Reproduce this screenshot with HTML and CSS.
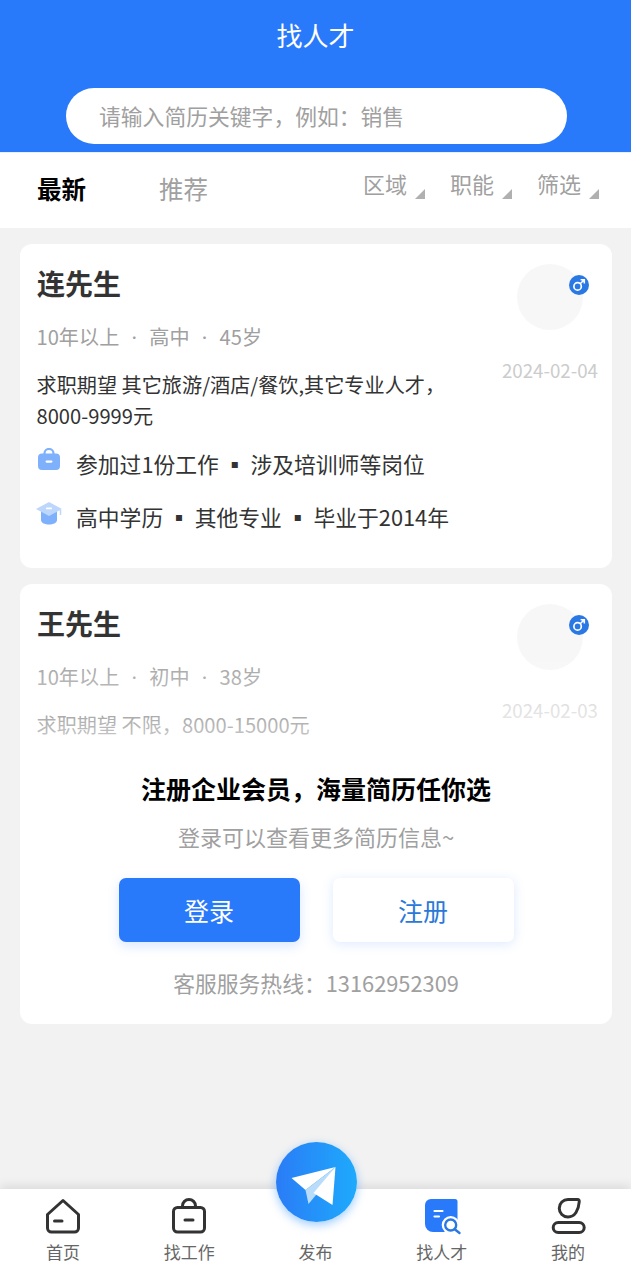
FILE: index.html
```html
<!DOCTYPE html>
<html lang="zh">
<head>
<meta charset="utf-8">
<title>找人才</title>
<link rel="stylesheet" href="styles.css">
</head>
<body>
<div class="app">
  <header class="top">
    <h1 class="top-title">找人才</h1>
    <div class="search">请输入简历关键字，例如：销售</div>
  </header>
  <nav class="filters">
    <span class="tab tab-on">最新</span>
    <span class="tab tab-off">推荐</span>
    <div class="drops">
      <span class="drop">区域</span>
      <span class="drop">职能</span>
      <span class="drop">筛选</span>
    </div>
  </nav>
  <main class="list">
    <article class="card">
      <div class="info">
        <div class="main">
          <h2 class="name">连先生</h2>
          <p class="meta">10年以上<i>•</i>高中<i>•</i>45岁</p>
          <p class="want">求职期望 其它旅游/酒店/餐饮,其它专业人才，<span class="nowrap">8000-9999元</span></p>
        </div>
        <div class="side">
          <div class="avatar">
            <svg class="sex" viewBox="0 0 20 20"><circle cx="10" cy="10" r="10" fill="#2a78e4"/><circle cx="8.6" cy="11.4" r="3.7" fill="none" stroke="#fff" stroke-width="1.7"/><path d="M11.2 8.8 15 5M11.6 4.7h3.7v3.7" fill="none" stroke="#fff" stroke-width="1.6"/></svg>
          </div>
          <div class="date">2024-02-04</div>
        </div>
      </div>
      <div class="fact">
        <svg class="fact-ico" viewBox="0 0 24 24"><path d="M7.500 7V5.500a4.500 4.500 0 0 1 9 0V7" fill="none" stroke="#7fb0fb" stroke-width="2.200"/><path d="M5 5.500h14a4 4 0 0 1 4 4V18a4 4 0 0 1-4 4H5a4 4 0 0 1-4-4V9.500a4 4 0 0 1 4-4z" fill="#7fb0fb"/><rect x="8.500" y="12.500" width="7" height="2.200" rx="1.100" fill="#fff"/></svg>
        <span>参加过1份工作<b>▪</b>涉及培训师等岗位</span>
      </div>
      <div class="fact fact-edu">
        <svg class="fact-ico fact-ico-cap" viewBox="0 0 26 24"><path d="M5 10h16v9c0 3-4 4.500-8 4.500S5 22 5 19z" fill="#7fb0fb"/><path d="M13 1 26 8l-13 7L0 8z" fill="#bcd6fc"/><rect x="10" y="6.500" width="6" height="1.800" rx=".9" fill="#fff"/><path d="M24.500 9v5" stroke="#bcd6fc" stroke-width="1.500"/></svg>
        <span>高中学历<b>▪</b>其他专业<b>▪</b>毕业于2014年</span>
      </div>
    </article>
    <article class="card card-locked">
      <div class="info">
        <div class="main">
          <h2 class="name">王先生</h2>
          <p class="meta">10年以上<i>•</i>初中<i>•</i>38岁</p>
          <p class="want">求职期望 不限，8000-15000元</p>
        </div>
        <div class="side">
          <div class="avatar">
            <svg class="sex" viewBox="0 0 20 20"><circle cx="10" cy="10" r="10" fill="#2a78e4"/><circle cx="8.6" cy="11.4" r="3.7" fill="none" stroke="#fff" stroke-width="1.7"/><path d="M11.2 8.8 15 5M11.6 4.7h3.7v3.7" fill="none" stroke="#fff" stroke-width="1.6"/></svg>
          </div>
          <div class="date">2024-02-03</div>
        </div>
      </div>
      <div class="veil"></div>
      <section class="gate">
        <h3 class="gate-title">注册企业会员，海量简历任你选</h3>
        <p class="gate-sub">登录可以查看更多简历信息~</p>
        <div class="gate-btns">
          <span class="btn btn-fill">登录</span>
          <span class="btn btn-line">注册</span>
        </div>
        <p class="gate-tel">客服服务热线：13162952309</p>
      </section>
    </article>
  </main>
  <footer class="bar">
    <div class="bar-item">
      <svg class="bar-ico" viewBox="0 0 36 36"><path d="M18 1.500 33.500 15.500V29a4 4 0 0 1-4 4H6.500a4 4 0 0 1-4-4V15.500z" fill="none" stroke="#333" stroke-width="3" stroke-linejoin="round"/><path d="M9.500 22h7.500" stroke="#333" stroke-width="3" stroke-linecap="round"/></svg>
      <span>首页</span>
    </div>
    <div class="bar-item">
      <svg class="bar-ico" viewBox="0 0 36 36"><path d="M11.500 8V7a6.500 6.500 0 0 1 13 0v1" fill="none" stroke="#333" stroke-width="3"/><rect x="2.500" y="8.500" width="31" height="24.500" rx="4" fill="none" stroke="#333" stroke-width="3"/><path d="M14 21h8" stroke="#333" stroke-width="3" stroke-linecap="round"/></svg>
      <span>找工作</span>
    </div>
    <div class="bar-item">
      <span class="bar-gap"></span>
      <span>发布</span>
    </div>
    <div class="bar-item">
      <svg class="bar-ico" viewBox="0 0 36 36"><path d="M7 0h24a2.500 2.500 0 0 1 2.500 2.500V29a4 4 0 0 1-4 4H9a8 8 0 0 1-8-8V6a6 6 0 0 1 6-6z" fill="#2979fb"/><path d="M10.500 12h8M10.500 17.500h4.500" stroke="#fff" stroke-width="2.200" stroke-linecap="round"/><circle cx="26.700" cy="26" r="9" fill="#fff"/><circle cx="26.700" cy="26" r="5.500" fill="#fff" stroke="#2a78e4" stroke-width="2.400"/><path d="M31 30.500l4.500 3.500" stroke="#2a78e4" stroke-width="2.400" stroke-linecap="round"/></svg>
      <span>找人才</span>
    </div>
    <div class="bar-item">
      <svg class="bar-ico bar-ico-me" viewBox="0 0 36 36"><path d="M18 .5H27.500Q29.500 .5 29.200 3C28.600 11 25 18 18 18A8.750 8.750 0 0 1 18 .5z" fill="none" stroke="#333" stroke-width="3"/><rect x="3.200" y="23.500" width="31" height="10" rx="5" fill="none" stroke="#333" stroke-width="3"/></svg>
      <span>我的</span>
    </div>
    <div class="fab">
      <svg viewBox="286.500 1152 60 60" class="fab-ico"><path d="M335 1167 291 1178 305 1190z" fill="#fff"/><path d="M335 1167 305 1190 308 1204 318 1192z" fill="#b9dcfa"/><path d="M335 1167 313 1193 332 1205z" fill="#fff"/></svg>
    </div>
  </footer>
</div>
</body>
</html>
```
FILE: styles.css
```css
* { box-sizing: border-box; margin: 0; padding: 0; }
html, body { height: 100%; }
body {
  font-family: "Noto Sans CJK SC", "Noto Sans", sans-serif;
  background: #f2f2f2;
  overflow: hidden;
}
.app { height: 1280px; display: flex; flex-direction: column; }

.top { height: 152px; background: #2979fb; padding-top: 17px; flex: none; }
.top-title { font-size: 26px; line-height: 36px; font-weight: 400; color: #fff; text-align: center; }
.search {
  width: 501px; height: 56px; margin: 35px 0 0 66px; padding-left: 33px;
  background: #fff; border-radius: 28px;
  font-size: 21.800px; line-height: 55px; color: #a0a0a0;
}

.filters { height: 76px; background: #fff; flex: none; display: flex; align-items: flex-start; border-top: 1px solid #e8f0fe; }
.tab { font-size: 24.500px; line-height: 36px; margin-top: 18px; }
.tab-on { margin-left: 37px; width: 122px; font-weight: 700; color: #000; }
.tab-off { color: #a0a0a0; }
.drops { margin-left: auto; margin-right: 7px; display: flex; margin-top: 14px; }
.drop { position: relative; width: 87px; padding-right: 20px; font-size: 22px; line-height: 33px; color: #a0a0a0; }
.drop::after {
  content: ""; position: absolute; left: 52px; top: 22px; width: 0; height: 0;
  border-style: solid; border-width: 0 0 10px 10px;
  border-color: transparent transparent #b0b0b0 transparent;
}

.list { flex: 1; padding: 16px 19px 0 20px; display: flex; flex-direction: column; gap: 16px; min-height: 0; }
.card { position: relative; background: #fff; border-radius: 12px; padding: 19px 14px 0 16px; }
.card:first-child { height: 324px; }
.card-locked { height: 440px; }

.info { display: flex; }
.main { flex: 1; min-width: 0; }
.name { margin-left: 1px; font-size: 28px; line-height: 40px; font-weight: 700; color: #333; }
.meta { margin: 18px 0 0 .5px; font-size: 20.150px; line-height: 31px; color: #a0a0a0; }
.meta i { font-style: normal; margin: 0 9px; font-size: 12px; vertical-align: 2px; }
.want { margin: 15.500px 0 0 .5px; font-size: 20.150px; line-height: 31px; color: #333; }
.nowrap { white-space: nowrap; }
.card-locked .want { color: #5c5c5c; }
.side { width: 96px; flex: none; display: flex; flex-direction: column; align-items: flex-start; padding-top: 1px; }
.avatar { position: relative; width: 66px; height: 66px; margin-left: 15px; border-radius: 50%; background: #f7f7f7; }
.sex { position: absolute; left: 52px; top: 11px; width: 20px; height: 20px; }
.date { margin-top: 26px; font-size: 18.700px; line-height: 28px; color: #ccc; white-space: nowrap; }

.fact { display: flex; align-items: center; margin-top: 15px; height: 34px; font-size: 21.800px; color: #333; }
.fact-edu { margin-top: 19px; }
.fact-ico { width: 24px; height: 24px; margin: -5px 15px 0 1px; flex: none; }
.fact-ico-cap { width: 26px; margin-left: 0; margin-right: 14px; }
.fact b { font-weight: 400; margin: 0 4.750px; font-size: 22px; }

.veil { position: absolute; left: 0; right: 0; top: 70px; height: 90px; background: linear-gradient(rgba(255,255,255,0), rgba(255,255,255,.7)); }
.gate { position: relative; text-align: center; margin: 30.500px 0 0 -16px; width: 592px; }
.gate-title { font-size: 25px; line-height: 36px; font-weight: 700; color: #000; }
.gate-sub { margin-top: 13px; font-size: 22px; line-height: 34px; color: #a0a0a0; }
.gate-btns { display: flex; justify-content: center; gap: 33px; margin-top: 25px; }
.btn { width: 181px; height: 64px; border-radius: 7px; font-size: 25px; line-height: 64px; }
.btn-fill { background: #2979fb; color: #fff; box-shadow: 0 4px 12px rgba(41,121,251,.18); }
.btn-line { background: #fff; color: #2a78d8; box-shadow: 0 2px 12px rgba(41,121,251,.16); }
.gate-tel { margin-top: 24px; font-size: 21.800px; line-height: 34px; color: #a0a0a0; }

.bar { position: relative; flex: none; height: 91px; background: #fff; display: grid; grid-template-columns: repeat(5, 1fr); box-shadow: 0 -3px 10px rgba(0,0,0,.1); }
.bar-item { display: flex; flex-direction: column; align-items: center; font-size: 17px; line-height: 24px; color: #666; padding-top: 10px; }
.bar-ico { width: 36px; height: 36px; margin-bottom: 5px; flex: none; overflow: visible; }
.bar-gap { height: 36px; margin-bottom: 5px; }
.fab {
  position: absolute; left: 276px; top: -47px; width: 81px; height: 80px; border-radius: 50%;
  background: linear-gradient(90deg, #2a7cf6, #1eaafc);
  box-shadow: 0 3px 10px rgba(41,140,255,.45);
  display: flex; align-items: center; justify-content: center;
}
.fab-ico { width: 60px; height: 60px; }
```
